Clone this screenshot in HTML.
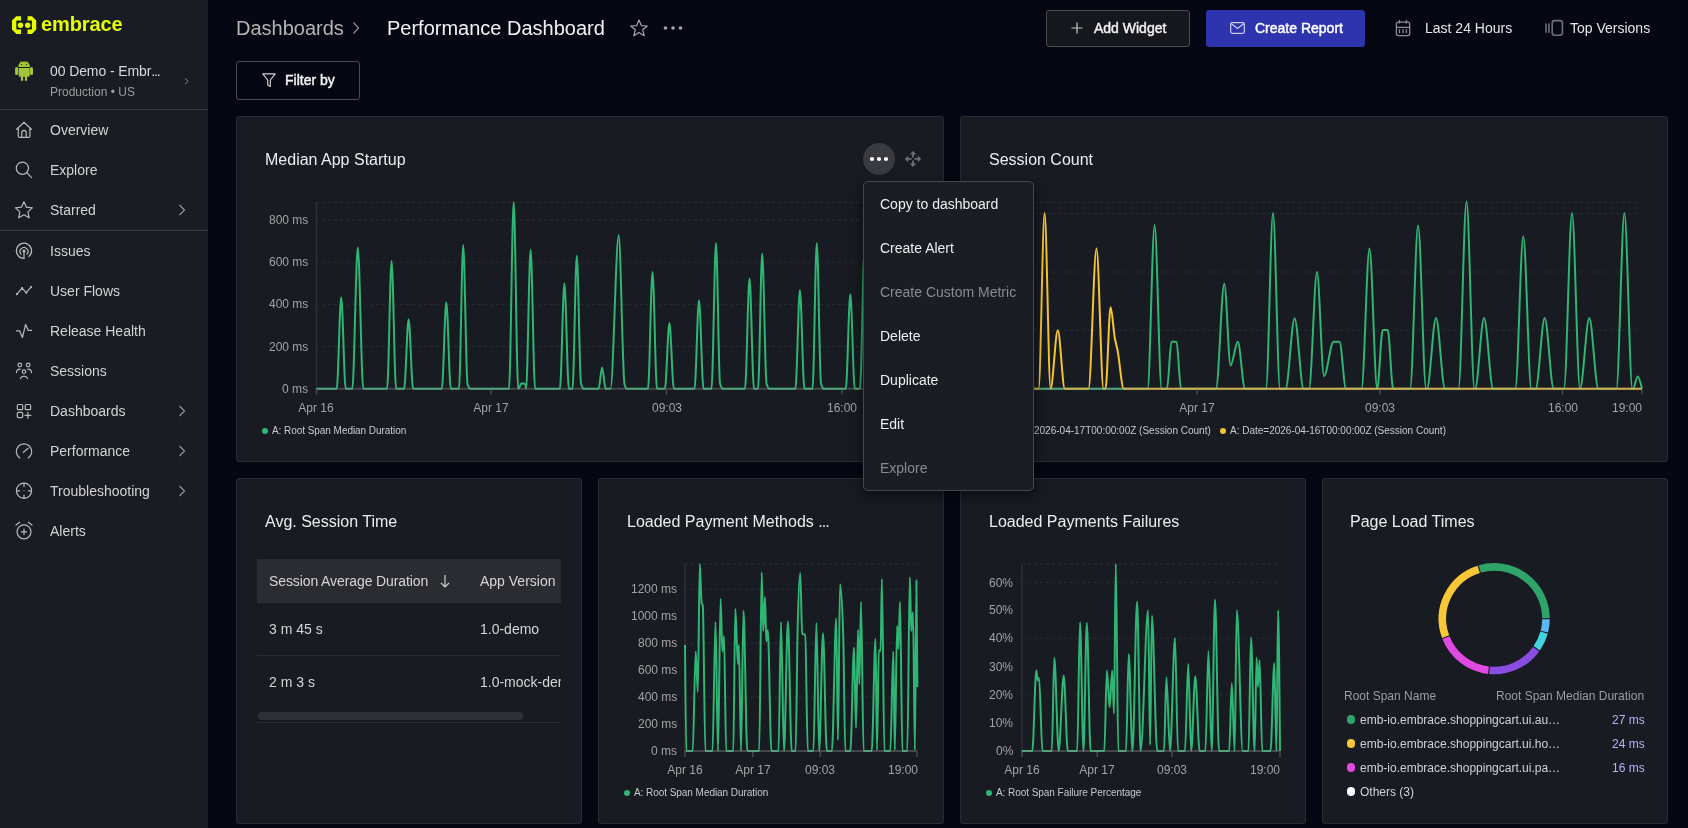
<!DOCTYPE html><html><head><meta charset="utf-8"><style>
*{box-sizing:border-box;margin:0;padding:0}
html,body{width:1688px;height:828px;overflow:hidden;background:#050812;font-family:"Liberation Sans",sans-serif}
.t{position:absolute;white-space:nowrap;will-change:transform}
.abs{position:absolute}
.side{position:absolute;left:0;top:0;width:208px;height:828px;background:#1a1c23}
.card{position:absolute;background:#191b22;border:1px solid #2b2c30;border-radius:3px}
svg{position:absolute;overflow:visible}
</style></head><body>
<div class="side"></div>
<svg style="left:0;top:0" width="208" height="110" viewBox="0 0 208 110">
<path d="M21.04,16.16 H16.33 L11.99,20.5 V29.57 L16.33,33.9 H21.04 V29.57 H16.33 V20.5 H21.04 Z" fill="#e6ff00"/>
<path d="M27.57,16.16 H31.9 L36.26,20.5 V29.57 L31.9,33.9 H27.57 V29.57 H31.9 V20.5 H27.57 Z" fill="#e6ff00"/>
<circle cx="20.5" cy="25.2" r="2.7" fill="#e6ff00"/><circle cx="27.75" cy="25.2" r="2.7" fill="#e6ff00"/>
</svg>
<div class="t" style="left:41.0px;top:14.1px;font-size:20px;line-height:20px;color:#e6ff00;font-weight:700;letter-spacing:-0.1px">embrace</div>
<svg style="left:0;top:50px" width="50" height="40" viewBox="0 50 50 40">
<path d="M18.2,67 Q18.6,61.6 24.1,61.6 Q29.6,61.6 30,67 Z" fill="#a2c53a"/>
<path d="M20.4,61.2 L21.4,62.8 M27.8,61.2 L26.8,62.8" stroke="#a2c53a" stroke-width="0.8"/>
<circle cx="21.6" cy="64.6" r="0.65" fill="#1a1c23"/><circle cx="26.5" cy="64.6" r="0.65" fill="#1a1c23"/>
<path d="M18.7,68 H29.7 V75.8 Q29.7,76.8 28.7,76.8 H19.7 Q18.7,76.8 18.7,75.8 Z" fill="#a2c53a"/>
<rect x="15.1" y="66.9" width="3.1" height="8.2" rx="1.5" fill="#a2c53a"/><rect x="29.9" y="66.9" width="3.1" height="8.2" rx="1.5" fill="#a2c53a"/>
<rect x="20.9" y="75" width="2.2" height="6.1" rx="1.1" fill="#a2c53a"/><rect x="24.9" y="75" width="2.2" height="6.1" rx="1.1" fill="#a2c53a"/>
</svg>
<div class="t" style="left:50.0px;top:64.1px;font-size:14px;line-height:14px;color:#d9d9d9;font-weight:400;letter-spacing:-0.1px">00 Demo - Embr<span style="letter-spacing:-1.2px">...</span></div>
<div class="t" style="left:50.0px;top:86.1px;font-size:12px;line-height:12px;color:#9c9c9c;font-weight:400;">Production • US</div>
<svg style="left:184px;top:77px" width="6" height="9" viewBox="0 0 6 9"><path d="M1.2,1.3 L4,4.2 L1.2,7.1" fill="none" stroke="#8a8a8a" stroke-width="1"/></svg>
<div class="abs" style="left:0;top:109px;width:208px;height:1px;background:#393b41"></div>
<div class="abs" style="left:0;top:230px;width:208px;height:1px;background:#393b41"></div>
<svg style="left:0;top:0" width="208" height="600" viewBox="0 0 208 600"><path d="M16.6,129.3 L24,122.2 L31.4,129.3 M18.3,128.2 V136.3 Q18.3,137.4 19.4,137.4 H28.8 Q29.9,137.4 29.9,136.3 V128.2 M21.8,137.4 V132.6 A2.2,2.2 0 0 1 26.2,132.6 V137.4" fill="none" stroke="#b9b9b9" stroke-width="1.2" stroke-linecap="round" stroke-linejoin="round"/><circle cx="22.4" cy="168.2" r="6.1" fill="none" stroke="#b9b9b9" stroke-width="1.2" stroke-linecap="round" stroke-linejoin="round"/><path d="M26.8,172.6 L31.6,177.6" fill="none" stroke="#b9b9b9" stroke-width="1.2" stroke-linecap="round" stroke-linejoin="round"/><path d="M23.90,201.70 L26.37,207.20 L32.36,207.85 L27.89,211.90 L29.13,217.80 L23.90,214.80 L18.67,217.80 L19.91,211.90 L15.44,207.85 L21.43,207.20 Z" fill="none" stroke="#b9b9b9" stroke-width="1.2" stroke-linecap="round" stroke-linejoin="round"/><path d="M28.9,256.6 A7.6,7.6 0 1 0 24,258.4" fill="none" stroke="#b9b9b9" stroke-width="1.2" stroke-linecap="round" stroke-linejoin="round"/><path d="M27,254.2 A4,4 0 1 0 21,254.2" fill="none" stroke="#b9b9b9" stroke-width="1.2" stroke-linecap="round" stroke-linejoin="round"/><circle cx="24" cy="251" r="1.6" fill="#b9b9b9"/><path d="M24,251 V258.3" fill="none" stroke="#b9b9b9" stroke-width="1.2" stroke-linecap="round" stroke-linejoin="round"/><path d="M16.9,294.2 L22.1,288.2 L26.2,292.7 L31.1,287.1" fill="none" stroke="#b9b9b9" stroke-width="1.2" stroke-linecap="round" stroke-linejoin="round"/><circle cx="16.9" cy="294.2" r="1.1" fill="#b9b9b9"/><circle cx="22.1" cy="288.2" r="1.1" fill="#b9b9b9"/><circle cx="26.2" cy="292.7" r="1.1" fill="#b9b9b9"/><circle cx="31.1" cy="287.1" r="1.1" fill="#b9b9b9"/><path d="M16.4,330.8 H19.6 L22.4,337.5 L25.6,324.4 L28.3,330.4 H31.5" fill="none" stroke="#b9b9b9" stroke-width="1.2" stroke-linecap="round" stroke-linejoin="round"/><circle cx="19.8" cy="365" r="1.8" fill="none" stroke="#b9b9b9" stroke-width="1.2" stroke-linecap="round" stroke-linejoin="round"/><circle cx="28.2" cy="365" r="1.8" fill="none" stroke="#b9b9b9" stroke-width="1.2" stroke-linecap="round" stroke-linejoin="round"/><circle cx="24" cy="371.6" r="1.8" fill="none" stroke="#b9b9b9" stroke-width="1.2" stroke-linecap="round" stroke-linejoin="round"/><path d="M16.5,372.6 A3.6,3.6 0 0 1 20.2,369.2 M27.8,369.2 A3.6,3.6 0 0 1 31.5,372.6 M20.4,378.6 A3.9,3.9 0 0 1 27.6,378.6" fill="none" stroke="#b9b9b9" stroke-width="1.2" stroke-linecap="round" stroke-linejoin="round"/><rect x="17.3" y="404.5" width="5.4" height="5.2" rx="1" fill="none" stroke="#b9b9b9" stroke-width="1.2" stroke-linecap="round" stroke-linejoin="round"/><rect x="25.2" y="404.5" width="5.4" height="5.2" rx="1" fill="none" stroke="#b9b9b9" stroke-width="1.2" stroke-linecap="round" stroke-linejoin="round"/><rect x="17.3" y="412.4" width="5.4" height="5.2" rx="1" fill="none" stroke="#b9b9b9" stroke-width="1.2" stroke-linecap="round" stroke-linejoin="round"/><path d="M27.9,412.3 V418.3 M24.9,415.3 H30.9" fill="none" stroke="#b9b9b9" stroke-width="1.2" stroke-linecap="round" stroke-linejoin="round"/><path d="M19.8,458 A7.7,7.7 0 1 1 28.2,458" fill="none" stroke="#b9b9b9" stroke-width="1.2" stroke-linecap="round" stroke-linejoin="round"/><path d="M23.4,452.3 L28.1,448.2" fill="none" stroke="#b9b9b9" stroke-width="1.2" stroke-linecap="round" stroke-linejoin="round"/><circle cx="24" cy="490.8" r="7.6" fill="none" stroke="#b9b9b9" stroke-width="1.2" stroke-linecap="round" stroke-linejoin="round"/><path d="M24,483.4 V486.6 M24,495 V498.2 M16.6,490.8 H19.8 M28.2,490.8 H31.4" fill="none" stroke="#b9b9b9" stroke-width="1.2" stroke-linecap="round" stroke-linejoin="round"/><circle cx="24" cy="490.8" r="0.6" fill="#b9b9b9"/><circle cx="24" cy="531.8" r="7" fill="none" stroke="#b9b9b9" stroke-width="1.2" stroke-linecap="round" stroke-linejoin="round"/><path d="M24,529.2 V534.4 M21.4,531.8 H26.6 M16,525 L19.6,522.3 M32,525 L28.4,522.3" fill="none" stroke="#b9b9b9" stroke-width="1.2" stroke-linecap="round" stroke-linejoin="round"/></svg>
<div class="t" style="left:50.0px;top:123.3px;font-size:14px;line-height:14px;color:#d3d3d3;font-weight:400;">Overview</div>
<div class="t" style="left:50.0px;top:163.3px;font-size:14px;line-height:14px;color:#d3d3d3;font-weight:400;">Explore</div>
<div class="t" style="left:50.0px;top:203.3px;font-size:14px;line-height:14px;color:#d3d3d3;font-weight:400;">Starred</div>
<svg style="left:178px;top:204px" width="8" height="12" viewBox="0 0 8 12"><path d="M1.5,1 L6.5,6 L1.5,11" fill="none" stroke="#9a9a9a" stroke-width="1.1"/></svg>
<div class="t" style="left:50.0px;top:244.3px;font-size:14px;line-height:14px;color:#d3d3d3;font-weight:400;">Issues</div>
<div class="t" style="left:50.0px;top:284.3px;font-size:14px;line-height:14px;color:#d3d3d3;font-weight:400;">User Flows</div>
<div class="t" style="left:50.0px;top:324.3px;font-size:14px;line-height:14px;color:#d3d3d3;font-weight:400;">Release Health</div>
<div class="t" style="left:50.0px;top:364.3px;font-size:14px;line-height:14px;color:#d3d3d3;font-weight:400;">Sessions</div>
<div class="t" style="left:50.0px;top:404.3px;font-size:14px;line-height:14px;color:#d3d3d3;font-weight:400;">Dashboards</div>
<svg style="left:178px;top:405px" width="8" height="12" viewBox="0 0 8 12"><path d="M1.5,1 L6.5,6 L1.5,11" fill="none" stroke="#9a9a9a" stroke-width="1.1"/></svg>
<div class="t" style="left:50.0px;top:444.3px;font-size:14px;line-height:14px;color:#d3d3d3;font-weight:400;">Performance</div>
<svg style="left:178px;top:445px" width="8" height="12" viewBox="0 0 8 12"><path d="M1.5,1 L6.5,6 L1.5,11" fill="none" stroke="#9a9a9a" stroke-width="1.1"/></svg>
<div class="t" style="left:50.0px;top:484.3px;font-size:14px;line-height:14px;color:#d3d3d3;font-weight:400;">Troubleshooting</div>
<svg style="left:178px;top:485px" width="8" height="12" viewBox="0 0 8 12"><path d="M1.5,1 L6.5,6 L1.5,11" fill="none" stroke="#9a9a9a" stroke-width="1.1"/></svg>
<div class="t" style="left:50.0px;top:524.3px;font-size:14px;line-height:14px;color:#d3d3d3;font-weight:400;">Alerts</div>
<div class="t" style="left:236.0px;top:18.4px;font-size:20px;line-height:20px;color:#b4b4b4;font-weight:400;">Dashboards</div>
<svg style="left:352px;top:21px" width="8" height="14" viewBox="0 0 8 14"><path d="M1.5,1.5 L6.5,7 L1.5,12.5" fill="none" stroke="#8d8d8d" stroke-width="1.2"/></svg>
<div class="t" style="left:387.0px;top:18.4px;font-size:20px;line-height:20px;color:#f2f2f2;font-weight:400;">Performance Dashboard</div>
<svg style="left:629px;top:18px" width="20" height="20" viewBox="0 0 20 20"><path d="M10,2 L12.3,7.6 L18.3,8 L13.7,11.8 L15.2,17.7 L10,14.4 L4.8,17.7 L6.3,11.8 L1.7,8 L7.7,7.6 Z" fill="none" stroke="#a6a6a6" stroke-width="1.2" stroke-linejoin="round"/></svg>
<svg style="left:662px;top:24px" width="22" height="8" viewBox="0 0 22 8"><circle cx="3.5" cy="4" r="1.8" fill="#a6a6a6"/><circle cx="11" cy="4" r="1.8" fill="#a6a6a6"/><circle cx="18.5" cy="4" r="1.8" fill="#a6a6a6"/></svg>
<div class="abs" style="left:1046px;top:10px;width:144px;height:37px;border:1px solid #4a4c52;border-radius:3px;background:#15171d"></div>
<svg style="left:1071px;top:22px" width="12" height="12" viewBox="0 0 12 12"><path d="M6,0.5 V11.5 M0.5,6 H11.5" stroke="#c6c6c6" stroke-width="1.2"/></svg>
<div class="t" style="left:1093.5px;top:21.1px;font-size:14px;line-height:14px;color:#f0f0f0;font-weight:400;-webkit-text-stroke:0.45px #f0f0f0">Add Widget</div>
<div class="abs" style="left:1206px;top:10px;width:159px;height:37px;border-radius:3px;background:#2e34ad"></div>
<svg style="left:1230px;top:22px" width="15" height="12" viewBox="0 0 15 12"><rect x="0.7" y="0.7" width="13.6" height="10.6" rx="1.5" fill="none" stroke="#c8cbf0" stroke-width="1.2"/><path d="M1,1.5 L7.5,6.5 L14,1.5" fill="none" stroke="#c8cbf0" stroke-width="1.2"/></svg>
<div class="t" style="left:1254.5px;top:21.1px;font-size:14px;line-height:14px;color:#ffffff;font-weight:400;-webkit-text-stroke:0.45px #ffffff">Create Report</div>
<svg style="left:1385px;top:12px" width="40" height="32" viewBox="1385 12 40 32"><rect x="1396.4" y="22.2" width="13.3" height="13.4" rx="2" fill="none" stroke="#8c8e94" stroke-width="1.3"/><path d="M1396.4,27.3 H1409.7 M1399.5,20.1 V23.6 M1406.4,20.1 V23.6 M1399.5,29.2 V33.2 M1403,29.2 V33.2 M1406.4,29.2 V33.2" stroke="#8c8e94" stroke-width="1.3"/></svg>
<div class="t" style="left:1425.0px;top:21.1px;font-size:14px;line-height:14px;color:#e6e6e6;font-weight:400;">Last 24 Hours</div>
<svg style="left:1535px;top:12px" width="40" height="32" viewBox="1535 12 40 32"><rect x="1552.2" y="20.6" width="10.2" height="14.6" rx="2.5" fill="none" stroke="#6e7077" stroke-width="1.6"/><path d="M1546,23.4 V32.8 M1548.9,23.4 V32.8" stroke="#6e7077" stroke-width="1.6"/></svg>
<div class="t" style="left:1570.0px;top:21.1px;font-size:14px;line-height:14px;color:#e6e6e6;font-weight:400;">Top Versions</div>
<div class="abs" style="left:236px;top:61px;width:124px;height:39px;border:1px solid #4a4c52;border-radius:3px"></div>
<svg style="left:262px;top:73px" width="14" height="15" viewBox="0 0 14 15"><path d="M0.8,0.8 H13.2 L8.3,7 V13.5 L5.7,12 V7 Z" fill="none" stroke="#cfcfcf" stroke-width="1.2" stroke-linejoin="round"/></svg>
<div class="t" style="left:285.0px;top:73.1px;font-size:14px;line-height:14px;color:#f2f2f2;font-weight:400;-webkit-text-stroke:0.45px #f2f2f2">Filter by</div>
<div class="card" style="left:236px;top:116px;width:708px;height:346px"></div>
<div class="card" style="left:960px;top:116px;width:708px;height:346px"></div>
<div class="card" style="left:236px;top:478px;width:346px;height:346px"></div>
<div class="card" style="left:598px;top:478px;width:346px;height:346px"></div>
<div class="card" style="left:960px;top:478px;width:346px;height:346px"></div>
<div class="card" style="left:1322px;top:478px;width:346px;height:346px"></div>
<div class="t" style="left:265.0px;top:151.5px;font-size:16px;line-height:16px;color:#ececec;font-weight:400;">Median App Startup</div>
<div class="t" style="left:989.0px;top:151.5px;font-size:16px;line-height:16px;color:#ececec;font-weight:400;">Session Count</div>
<div class="t" style="left:265.0px;top:513.5px;font-size:16px;line-height:16px;color:#ececec;font-weight:400;">Avg. Session Time</div>
<div class="t" style="left:627.0px;top:513.5px;font-size:16px;line-height:16px;color:#ececec;font-weight:400;">Loaded Payment Methods <span style="letter-spacing:-0.9px">...</span></div>
<div class="t" style="left:989.0px;top:513.5px;font-size:16px;line-height:16px;color:#ececec;font-weight:400;">Loaded Payments Failures</div>
<div class="t" style="left:1350.0px;top:513.5px;font-size:16px;line-height:16px;color:#ececec;font-weight:400;">Page Load Times</div>
<div class="t" style="right:1380.0px;top:213.7px;font-size:12px;line-height:12px;color:#a3a3a3;font-weight:400;">800 ms</div>
<div class="t" style="right:1380.0px;top:256.1px;font-size:12px;line-height:12px;color:#a3a3a3;font-weight:400;">600 ms</div>
<div class="t" style="right:1380.0px;top:298.3px;font-size:12px;line-height:12px;color:#a3a3a3;font-weight:400;">400 ms</div>
<div class="t" style="right:1380.0px;top:340.6px;font-size:12px;line-height:12px;color:#a3a3a3;font-weight:400;">200 ms</div>
<div class="t" style="right:1380.0px;top:382.9px;font-size:12px;line-height:12px;color:#a3a3a3;font-weight:400;">0 ms</div>
<div class="t" style="left:316.0px;transform:translateX(-50%);top:401.8px;font-size:12px;line-height:12px;color:#a3a3a3;font-weight:400;">Apr 16</div>
<div class="t" style="left:491.0px;transform:translateX(-50%);top:401.8px;font-size:12px;line-height:12px;color:#a3a3a3;font-weight:400;">Apr 17</div>
<div class="t" style="left:666.7px;transform:translateX(-50%);top:401.8px;font-size:12px;line-height:12px;color:#a3a3a3;font-weight:400;">09:03</div>
<div class="t" style="left:842.0px;transform:translateX(-50%);top:401.8px;font-size:12px;line-height:12px;color:#a3a3a3;font-weight:400;">16:00</div>
<div class="abs" style="left:262px;top:427.5px;width:6px;height:6px;border-radius:3px;background:#2fb574"></div>
<div class="t" style="left:272.0px;top:425.8px;font-size:10px;line-height:10px;color:#c9c9c9;font-weight:400;letter-spacing:-0.05px">A: Root Span Median Duration</div>
<div class="t" style="left:1197.0px;transform:translateX(-50%);top:401.8px;font-size:12px;line-height:12px;color:#a3a3a3;font-weight:400;">Apr 17</div>
<div class="t" style="left:1380.0px;transform:translateX(-50%);top:401.8px;font-size:12px;line-height:12px;color:#a3a3a3;font-weight:400;">09:03</div>
<div class="t" style="left:1562.6px;transform:translateX(-50%);top:401.8px;font-size:12px;line-height:12px;color:#a3a3a3;font-weight:400;">16:00</div>
<div class="t" style="left:1627.0px;transform:translateX(-50%);top:401.8px;font-size:12px;line-height:12px;color:#a3a3a3;font-weight:400;">19:00</div>
<div class="t" style="left:1034.0px;top:425.8px;font-size:10px;line-height:10px;color:#c9c9c9;font-weight:400;">2026-04-17T00:00:00Z (Session Count)</div>
<div class="abs" style="left:1220px;top:427.5px;width:6px;height:6px;border-radius:3px;background:#f5c431"></div>
<div class="t" style="left:1230.0px;top:425.8px;font-size:10px;line-height:10px;color:#c9c9c9;font-weight:400;">A: Date=2026-04-16T00:00:00Z (Session Count)</div>
<div class="abs" style="left:257px;top:559px;width:304px;height:44px;background:#2a2c31"></div>
<div class="t" style="left:269.0px;top:574.1px;font-size:14px;line-height:14px;color:#d6d6d6;font-weight:400;letter-spacing:-0.1px">Session Average Duration</div>
<svg style="left:440px;top:574px" width="10" height="14" viewBox="0 0 10 14"><path d="M5,1 V13 M1,9 L5,13 L9,9" fill="none" stroke="#d0d0d0" stroke-width="1.2"/></svg>
<div class="t" style="left:480.0px;top:574.1px;font-size:14px;line-height:14px;color:#d6d6d6;font-weight:400;">App Version</div>
<div class="t" style="left:269.0px;top:622.1px;font-size:14px;line-height:14px;color:#d6d6d6;font-weight:400;">3 m 45 s</div>
<div class="t" style="left:480.0px;top:622.1px;font-size:14px;line-height:14px;color:#d6d6d6;font-weight:400;">1.0-demo</div>
<div class="abs" style="left:257px;top:655px;width:304px;height:1px;background:#2b2d33"></div>
<div class="t" style="left:269.0px;top:675.1px;font-size:14px;line-height:14px;color:#d6d6d6;font-weight:400;">2 m 3 s</div>
<div class="abs" style="left:480px;top:670px;width:81px;height:22px;overflow:hidden"><div class="t" style="left:0;top:5.15px;font-size:14px;line-height:14px;color:#d6d6d6">1.0-mock-demo</div></div>
<div class="abs" style="left:258px;top:712px;width:265px;height:8px;border-radius:4px;background:#2e3036"></div>
<div class="abs" style="left:257px;top:722px;width:304px;height:1px;background:#2b2d33"></div>
<div class="t" style="right:1011.0px;top:583.4px;font-size:12px;line-height:12px;color:#a3a3a3;font-weight:400;">1200 ms</div>
<div class="t" style="right:1011.0px;top:610.4px;font-size:12px;line-height:12px;color:#a3a3a3;font-weight:400;">1000 ms</div>
<div class="t" style="right:1011.0px;top:637.4px;font-size:12px;line-height:12px;color:#a3a3a3;font-weight:400;">800 ms</div>
<div class="t" style="right:1011.0px;top:664.1px;font-size:12px;line-height:12px;color:#a3a3a3;font-weight:400;">600 ms</div>
<div class="t" style="right:1011.0px;top:691.1px;font-size:12px;line-height:12px;color:#a3a3a3;font-weight:400;">400 ms</div>
<div class="t" style="right:1011.0px;top:718.1px;font-size:12px;line-height:12px;color:#a3a3a3;font-weight:400;">200 ms</div>
<div class="t" style="right:1011.0px;top:745.1px;font-size:12px;line-height:12px;color:#a3a3a3;font-weight:400;">0 ms</div>
<div class="t" style="left:685.0px;transform:translateX(-50%);top:763.8px;font-size:12px;line-height:12px;color:#a3a3a3;font-weight:400;">Apr 16</div>
<div class="t" style="left:752.8px;transform:translateX(-50%);top:763.8px;font-size:12px;line-height:12px;color:#a3a3a3;font-weight:400;">Apr 17</div>
<div class="t" style="left:820.3px;transform:translateX(-50%);top:763.8px;font-size:12px;line-height:12px;color:#a3a3a3;font-weight:400;">09:03</div>
<div class="t" style="left:903.0px;transform:translateX(-50%);top:763.8px;font-size:12px;line-height:12px;color:#a3a3a3;font-weight:400;">19:00</div>
<div class="abs" style="left:623.5px;top:789.5px;width:6px;height:6px;border-radius:3px;background:#2fb574"></div>
<div class="t" style="left:634.0px;top:788.0px;font-size:10px;line-height:10px;color:#c9c9c9;font-weight:400;letter-spacing:-0.05px">A: Root Span Median Duration</div>
<div class="t" style="right:674.5px;top:576.5px;font-size:12px;line-height:12px;color:#a3a3a3;font-weight:400;">60%</div>
<div class="t" style="right:674.5px;top:604.4px;font-size:12px;line-height:12px;color:#a3a3a3;font-weight:400;">50%</div>
<div class="t" style="right:674.5px;top:632.3px;font-size:12px;line-height:12px;color:#a3a3a3;font-weight:400;">40%</div>
<div class="t" style="right:674.5px;top:660.5px;font-size:12px;line-height:12px;color:#a3a3a3;font-weight:400;">30%</div>
<div class="t" style="right:674.5px;top:688.7px;font-size:12px;line-height:12px;color:#a3a3a3;font-weight:400;">20%</div>
<div class="t" style="right:674.5px;top:716.9px;font-size:12px;line-height:12px;color:#a3a3a3;font-weight:400;">10%</div>
<div class="t" style="right:674.5px;top:745.1px;font-size:12px;line-height:12px;color:#a3a3a3;font-weight:400;">0%</div>
<div class="t" style="left:1022.0px;transform:translateX(-50%);top:763.8px;font-size:12px;line-height:12px;color:#a3a3a3;font-weight:400;">Apr 16</div>
<div class="t" style="left:1097.2px;transform:translateX(-50%);top:763.8px;font-size:12px;line-height:12px;color:#a3a3a3;font-weight:400;">Apr 17</div>
<div class="t" style="left:1172.0px;transform:translateX(-50%);top:763.8px;font-size:12px;line-height:12px;color:#a3a3a3;font-weight:400;">09:03</div>
<div class="t" style="left:1265.0px;transform:translateX(-50%);top:763.8px;font-size:12px;line-height:12px;color:#a3a3a3;font-weight:400;">19:00</div>
<div class="abs" style="left:985.5px;top:789.5px;width:6px;height:6px;border-radius:3px;background:#2fb574"></div>
<div class="t" style="left:996.0px;top:788.0px;font-size:10px;line-height:10px;color:#c9c9c9;font-weight:400;letter-spacing:-0.05px">A: Root Span Failure Percentage</div>
<div class="t" style="left:1343.5px;top:689.9px;font-size:12px;line-height:12px;color:#9d9d9d;font-weight:400;">Root Span Name</div>
<div class="t" style="right:43.5px;top:689.9px;font-size:12px;line-height:12px;color:#9d9d9d;font-weight:400;">Root Span Median Duration</div>
<div class="abs" style="left:1346.8px;top:715.1999999999999px;width:8.4px;height:8.4px;border-radius:5px;background:#2ea36a"></div>
<div class="t" style="left:1359.5px;top:713.5px;font-size:12px;line-height:12px;color:#d2d2d2;font-weight:400;">emb-io.embrace.shoppingcart.ui.au…</div>
<div class="t" style="right:43.5px;top:713.5px;font-size:12px;line-height:12px;color:#b6b3fa;font-weight:400;">27 ms</div>
<div class="abs" style="left:1346.8px;top:739.1999999999999px;width:8.4px;height:8.4px;border-radius:5px;background:#f8c737"></div>
<div class="t" style="left:1359.5px;top:737.5px;font-size:12px;line-height:12px;color:#d2d2d2;font-weight:400;">emb-io.embrace.shoppingcart.ui.ho…</div>
<div class="t" style="right:43.5px;top:737.5px;font-size:12px;line-height:12px;color:#b6b3fa;font-weight:400;">24 ms</div>
<div class="abs" style="left:1346.8px;top:763.1999999999999px;width:8.4px;height:8.4px;border-radius:5px;background:#e04ae3"></div>
<div class="t" style="left:1359.5px;top:761.5px;font-size:12px;line-height:12px;color:#d2d2d2;font-weight:400;">emb-io.embrace.shoppingcart.ui.pa…</div>
<div class="t" style="right:43.5px;top:761.5px;font-size:12px;line-height:12px;color:#b6b3fa;font-weight:400;">16 ms</div>
<div class="abs" style="left:1346.8px;top:787.3px;width:8.4px;height:8.4px;border-radius:5px;background:#ffffff"></div>
<div class="t" style="left:1359.5px;top:785.6px;font-size:12px;line-height:12px;color:#d2d2d2;font-weight:400;">Others (3)</div>
<svg style="left:0;top:0" width="1688" height="828" viewBox="0 0 1688 828"><path d="M316,202.5 H917" stroke="#2a2c32" stroke-width="1" stroke-dasharray="3,3"/><path d="M316,220 H917" stroke="#2a2c32" stroke-width="1" stroke-dasharray="3,3"/><path d="M316,262.2 H917" stroke="#2a2c32" stroke-width="1" stroke-dasharray="3,3"/><path d="M316,304.3 H917" stroke="#2a2c32" stroke-width="1" stroke-dasharray="3,3"/><path d="M316,346.5 H917" stroke="#2a2c32" stroke-width="1" stroke-dasharray="3,3"/><path d="M316.5,202 V388.8" stroke="#2e2f34" stroke-width="1.6"/><path d="M316.50,388.80C323.23,388.80 329.97,388.80 336.70,388.80C338.20,388.80 339.70,297.20 341.20,297.20C342.70,297.20 344.20,388.80 345.70,388.80C347.90,388.80 350.10,388.80 352.30,388.80C354.13,388.80 355.97,247.40 357.80,247.40C359.63,247.40 361.47,388.80 363.30,388.80C371.23,388.80 379.17,388.80 387.10,388.80C388.60,388.80 390.10,261.00 391.60,261.00C393.10,261.00 394.60,388.80 396.10,388.80C398.77,388.80 401.43,388.80 404.10,388.80C405.60,388.80 407.10,319.30 408.60,319.30C410.10,319.30 411.60,388.80 413.10,388.80C422.67,388.80 432.23,388.80 441.80,388.80C443.30,388.80 444.80,302.30 446.30,302.30C447.80,302.30 449.30,388.80 450.80,388.80C453.53,388.80 456.27,388.80 459.00,388.80C460.40,388.80 461.80,245.00 463.20,245.00C464.63,245.00 466.07,379.41 467.50,384.00C468.50,387.20 469.50,388.80 470.50,388.80C483.33,388.80 496.17,388.80 509.00,388.80C510.57,388.80 512.13,202.00 513.70,202.00C515.20,202.00 516.70,388.80 518.20,388.80C519.40,388.80 520.60,383.30 521.80,383.30C523.00,383.30 524.20,383.70 525.40,384.50C525.63,384.66 525.87,388.80 526.10,388.80C527.60,388.80 529.10,249.80 530.60,249.80C532.10,249.80 533.60,388.80 535.10,388.80C543.37,388.80 551.63,388.80 559.90,388.80C561.40,388.80 562.90,283.60 564.40,283.60C565.90,283.60 567.40,388.80 568.90,388.80C570.10,388.80 571.30,388.80 572.50,388.80C573.93,388.80 575.37,255.80 576.80,255.80C578.20,255.80 579.60,378.55 581.00,383.50C582.00,387.03 583.00,388.80 584.00,388.80C588.87,388.80 593.73,388.80 598.60,388.80C599.77,388.80 600.93,367.60 602.10,367.60C603.27,367.60 604.43,388.80 605.60,388.80C607.23,388.80 608.87,388.80 610.50,388.80C613.23,388.80 615.97,235.30 618.70,235.30C620.63,235.30 622.57,376.58 624.50,384.00C625.33,387.20 626.17,388.80 627.00,388.80C634.00,388.80 641.00,388.80 648.00,388.80C649.50,388.80 651.00,272.10 652.50,272.10C654.00,272.10 655.50,388.80 657.00,388.80C659.63,388.80 662.27,388.80 664.90,388.80C666.40,388.80 667.90,322.90 669.40,322.90C670.90,322.90 672.40,388.80 673.90,388.80C680.77,388.80 687.63,388.80 694.50,388.80C696.00,388.80 697.50,300.20 699.00,300.20C700.50,300.20 702.00,388.80 703.50,388.80C706.17,388.80 708.83,388.80 711.50,388.80C713.00,388.80 714.50,242.90 716.00,242.90C717.33,242.90 718.67,378.79 720.00,383.50C721.00,387.03 722.00,388.80 723.00,388.80C730.33,388.80 737.67,388.80 745.00,388.80C746.50,388.80 748.00,278.50 749.50,278.50C751.00,278.50 752.50,388.80 754.00,388.80C755.33,388.80 756.67,388.80 758.00,388.80C759.40,388.80 760.80,253.40 762.20,253.40C763.63,253.40 765.07,378.44 766.50,383.50C767.50,387.03 768.50,388.80 769.50,388.80C778.13,388.80 786.77,388.80 795.40,388.80C796.90,388.80 798.40,290.30 799.90,290.30C801.40,290.30 802.90,388.80 804.40,388.80C807.10,388.80 809.80,388.80 812.50,388.80C813.93,388.80 815.37,242.90 816.80,242.90C818.20,242.90 819.60,378.55 821.00,383.50C822.00,387.03 823.00,388.80 824.00,388.80C831.27,388.80 838.53,388.80 845.80,388.80C847.30,388.80 848.80,294.20 850.30,294.20C851.80,294.20 853.30,388.80 854.80,388.80C856.53,388.80 858.27,388.80 860.00,388.80C861.50,388.80 863.00,250.00 864.50,250.00C866.00,250.00 867.50,388.80 869.00,388.80C872.83,388.80 876.67,388.80 880.50,388.80C882.00,388.80 883.50,280.00 885.00,280.00C886.50,280.00 888.00,388.80 889.50,388.80C892.17,388.80 894.83,388.80 897.50,388.80C899.00,388.80 900.50,300.00 902.00,300.00C903.50,300.00 905.00,388.80 906.50,388.80C910.00,388.80 913.50,388.80 917.00,388.80" fill="none" stroke="#2fb574" stroke-width="2"/><path d="M1022,202.5 H1641" stroke="#2a2c32" stroke-width="1" stroke-dasharray="3,3"/><path d="M1022,213.5 H1641" stroke="#2a2c32" stroke-width="1" stroke-dasharray="3,3"/><path d="M1022,272 H1641" stroke="#2a2c32" stroke-width="1" stroke-dasharray="3,3"/><path d="M1022,330 H1641" stroke="#2a2c32" stroke-width="1" stroke-dasharray="3,3"/><path d="M1022,202 V388.8" stroke="#2e2f34" stroke-width="1.6"/><path d="M1022.00,388.80C1063.87,388.80 1105.73,388.80 1147.60,388.80C1149.93,388.80 1152.27,225.00 1154.60,225.00C1156.93,225.00 1159.27,388.80 1161.60,388.80C1163.40,388.80 1165.20,388.80 1167.00,388.80C1168.50,388.80 1170.00,341.80 1171.50,341.80C1173.17,341.80 1174.83,341.80 1176.50,341.80C1178.00,341.80 1179.50,388.80 1181.00,388.80C1192.67,388.80 1204.33,388.80 1216.00,388.80C1218.77,388.80 1221.53,283.70 1224.30,283.70C1226.40,283.70 1228.50,365.40 1230.60,365.40C1233.00,365.40 1235.40,341.80 1237.80,341.80C1240.20,341.80 1242.60,388.80 1245.00,388.80C1252.00,388.80 1259.00,388.80 1266.00,388.80C1268.33,388.80 1270.67,213.00 1273.00,213.00C1275.33,213.00 1277.67,388.80 1280.00,388.80C1281.87,388.80 1283.73,388.80 1285.60,388.80C1288.60,388.80 1291.60,318.20 1294.60,318.20C1297.60,318.20 1300.60,388.80 1303.60,388.80C1305.40,388.80 1307.20,388.80 1309.00,388.80C1311.67,388.80 1314.33,272.00 1317.00,272.00C1319.33,272.00 1321.67,376.00 1324.00,376.00C1327.17,376.00 1330.33,341.70 1333.50,341.70C1335.50,341.70 1337.50,341.70 1339.50,341.70C1341.67,341.70 1343.83,388.80 1346.00,388.80C1351.17,388.80 1356.33,388.80 1361.50,388.80C1364.17,388.80 1366.83,248.40 1369.50,248.40C1372.07,248.40 1374.63,388.80 1377.20,388.80C1379.03,388.80 1380.87,330.00 1382.70,330.00C1384.37,330.00 1386.03,330.00 1387.70,330.00C1389.53,330.00 1391.37,388.80 1393.20,388.80C1398.83,388.80 1404.47,388.80 1410.10,388.80C1412.77,388.80 1415.43,225.50 1418.10,225.50C1420.77,225.50 1423.43,388.80 1426.10,388.80C1426.40,388.80 1426.70,388.80 1427.00,388.80C1430.00,388.80 1433.00,318.00 1436.00,318.00C1439.00,318.00 1442.00,388.80 1445.00,388.80C1449.50,388.80 1454.00,388.80 1458.50,388.80C1461.17,388.80 1463.83,201.40 1466.50,201.40C1469.17,201.40 1471.83,388.80 1474.50,388.80C1474.70,388.80 1474.90,388.80 1475.10,388.80C1478.10,388.80 1481.10,318.00 1484.10,318.00C1487.10,318.00 1490.10,388.80 1493.10,388.80C1500.50,388.80 1507.90,388.80 1515.30,388.80C1517.97,388.80 1520.63,236.50 1523.30,236.50C1525.97,236.50 1528.63,388.80 1531.30,388.80C1532.77,388.80 1534.23,388.80 1535.70,388.80C1538.70,388.80 1541.70,318.00 1544.70,318.00C1547.70,318.00 1550.70,388.80 1553.70,388.80C1557.13,388.80 1560.57,388.80 1564.00,388.80C1566.67,388.80 1569.33,213.00 1572.00,213.00C1574.67,213.00 1577.33,388.80 1580.00,388.80C1583.10,388.80 1586.20,318.00 1589.30,318.00C1592.30,318.00 1595.30,388.80 1598.30,388.80C1604.33,388.80 1610.37,388.80 1616.40,388.80C1619.07,388.80 1621.73,213.00 1624.40,213.00C1627.07,213.00 1629.73,388.80 1632.40,388.80C1632.60,388.80 1632.80,388.80 1633.00,388.80C1634.57,388.80 1636.13,376.50 1637.70,376.50C1639.13,376.50 1640.57,382.65 1642.00,388.80" fill="none" stroke="#2fb574" stroke-width="2"/><path d="M1022.00,388.80C1027.53,388.80 1033.07,388.80 1038.60,388.80C1040.60,388.80 1042.60,213.00 1044.60,213.00C1046.60,213.00 1048.60,388.80 1050.60,388.80C1053.00,388.80 1055.40,330.20 1057.80,330.20C1060.13,330.20 1062.47,388.80 1064.80,388.80C1072.70,388.80 1080.60,388.80 1088.50,388.80C1091.17,388.80 1093.83,248.50 1096.50,248.50C1098.83,248.50 1101.17,388.80 1103.50,388.80C1104.17,388.80 1104.83,388.80 1105.50,388.80C1107.20,388.80 1108.90,307.20 1110.60,307.20C1112.00,307.20 1113.40,330.20 1114.80,338.00C1115.70,343.02 1116.60,345.54 1117.50,350.00C1119.60,360.41 1121.70,388.80 1123.80,388.80C1296.53,388.80 1469.27,388.80 1642.00,388.80" fill="none" stroke="#f5c431" stroke-width="2"/><path d="M685,564 H917" stroke="#2a2c32" stroke-width="1" stroke-dasharray="3,3"/><path d="M685,589.3 H917" stroke="#2a2c32" stroke-width="1" stroke-dasharray="3,3"/><path d="M685,643.3 H917" stroke="#2a2c32" stroke-width="1" stroke-dasharray="3,3"/><path d="M685,697 H917" stroke="#2a2c32" stroke-width="1" stroke-dasharray="3,3"/><path d="M685,564 V751" stroke="#2e2f34" stroke-width="1.6"/><path d="M685.00,645.00C685.43,698.00 685.87,751.00 686.30,751.00C688.43,751.00 690.57,751.00 692.70,751.00C693.70,751.00 694.70,651.40 695.70,651.40C696.40,651.40 697.10,692.00 697.80,692.00C698.47,692.00 699.13,564.00 699.80,564.00C700.40,564.00 701.00,600.20 701.60,603.00C702.00,604.87 702.40,603.93 702.80,605.80C703.67,609.84 704.53,751.00 705.40,751.00C707.77,751.00 710.13,751.00 712.50,751.00C713.50,751.00 714.50,622.00 715.50,622.00C716.33,622.00 717.17,751.00 718.00,751.00C718.87,751.00 719.73,598.70 720.60,598.70C721.20,598.70 721.80,651.40 722.40,651.40C722.93,651.40 723.47,636.00 724.00,636.00C724.73,636.00 725.47,751.00 726.20,751.00C728.57,751.00 730.93,751.00 733.30,751.00C733.97,751.00 734.63,608.80 735.30,608.80C736.17,608.80 737.03,664.00 737.90,664.00C738.23,664.00 738.57,645.00 738.90,645.00C739.60,645.00 740.30,751.00 741.00,751.00C741.83,751.00 742.67,610.80 743.50,610.80C744.77,610.80 746.03,751.00 747.30,751.00C751.27,751.00 755.23,751.00 759.20,751.00C760.03,751.00 760.87,572.30 761.70,572.30C762.20,572.30 762.70,631.00 763.20,631.00C763.80,631.00 764.40,596.90 765.00,596.90C765.43,596.90 765.87,641.30 766.30,641.30C766.80,641.30 767.30,630.00 767.80,630.00C769.00,630.00 770.20,751.00 771.40,751.00C773.77,751.00 776.13,751.00 778.50,751.00C779.33,751.00 780.17,622.00 781.00,622.00C782.00,622.00 783.00,751.00 784.00,751.00C785.30,751.00 786.60,621.50 787.90,621.50C789.17,621.50 790.43,751.00 791.70,751.00C793.00,751.00 794.30,751.00 795.60,751.00C796.27,751.00 796.93,660.10 797.60,631.00C798.47,593.17 799.33,572.80 800.20,572.80C800.87,572.80 801.53,633.12 802.20,633.70C803.20,634.57 804.20,634.13 805.20,635.00C806.07,635.75 806.93,751.00 807.80,751.00C809.67,751.00 811.53,751.00 813.40,751.00C814.40,751.00 815.40,623.00 816.40,623.00C817.33,623.00 818.27,751.00 819.20,751.00C820.47,751.00 821.73,633.20 823.00,633.20C824.27,633.20 825.53,751.00 826.80,751.00C828.50,751.00 830.20,751.00 831.90,751.00C833.33,751.00 834.77,618.50 836.20,618.50C836.80,618.50 837.40,740.00 838.00,740.00C838.67,740.00 839.33,584.20 840.00,584.20C841.10,584.20 842.20,602.40 843.30,638.80C843.97,660.86 844.63,751.00 845.30,751.00C847.00,751.00 848.70,751.00 850.40,751.00C851.60,751.00 852.80,647.60 854.00,647.60C854.67,647.60 855.33,728.00 856.00,728.00C856.67,728.00 857.33,630.00 858.00,630.00C858.43,630.00 858.87,684.40 859.30,684.40C859.87,684.40 860.43,602.00 861.00,602.00C861.87,602.00 862.73,751.00 863.60,751.00C866.30,751.00 869.00,751.00 871.70,751.00C872.97,751.00 874.23,638.80 875.50,638.80C876.00,638.80 876.50,750.00 877.00,750.00C877.60,750.00 878.20,650.20 878.80,650.20C879.40,650.20 880.00,651.00 880.60,651.00C881.03,651.00 881.47,579.00 881.90,579.00C882.73,579.00 883.57,751.00 884.40,751.00C886.37,751.00 888.33,751.00 890.30,751.00C891.30,751.00 892.30,651.40 893.30,651.40C893.80,651.40 894.30,750.00 894.80,750.00C895.57,750.00 896.33,626.00 897.10,626.00C897.53,626.00 897.97,649.00 898.40,649.00C898.93,649.00 899.47,602.00 900.00,602.00C900.80,602.00 901.60,751.00 902.40,751.00C904.03,751.00 905.67,751.00 907.30,751.00C908.13,751.00 908.97,577.30 909.80,577.30C910.30,577.30 910.80,631.00 911.30,631.00C911.87,631.00 912.43,612.00 913.00,612.00C913.63,612.00 914.27,750.00 914.90,750.00C915.40,750.00 915.90,580.40 916.40,580.40C916.73,580.40 917.07,633.70 917.40,687.00" fill="none" stroke="#2fb574" stroke-width="2"/><path d="M1022,564 H1280" stroke="#2a2c32" stroke-width="1" stroke-dasharray="3,3"/><path d="M1022,582.4 H1280" stroke="#2a2c32" stroke-width="1" stroke-dasharray="3,3"/><path d="M1022,638.2 H1280" stroke="#2a2c32" stroke-width="1" stroke-dasharray="3,3"/><path d="M1022,694.6 H1280" stroke="#2a2c32" stroke-width="1" stroke-dasharray="3,3"/><path d="M1022,564 V751" stroke="#2e2f34" stroke-width="1.6"/><path d="M1022.00,751.00C1025.43,751.00 1028.87,751.00 1032.30,751.00C1033.63,751.00 1034.97,670.50 1036.30,670.50C1036.80,670.50 1037.30,680.60 1037.80,680.60C1038.23,680.60 1038.67,678.00 1039.10,678.00C1040.20,678.00 1041.30,751.00 1042.40,751.00C1045.53,751.00 1048.67,751.00 1051.80,751.00C1052.63,751.00 1053.47,657.80 1054.30,657.80C1055.77,657.80 1057.23,751.00 1058.70,751.00C1060.37,751.00 1062.03,675.60 1063.70,675.60C1065.07,675.60 1066.43,751.00 1067.80,751.00C1070.93,751.00 1074.07,751.00 1077.20,751.00C1078.13,751.00 1079.07,622.30 1080.00,622.30C1081.17,622.30 1082.33,751.00 1083.50,751.00C1084.60,751.00 1085.70,623.00 1086.80,623.00C1088.07,623.00 1089.33,751.00 1090.60,751.00C1095.17,751.00 1099.73,751.00 1104.30,751.00C1105.17,751.00 1106.03,670.50 1106.90,670.50C1107.83,670.50 1108.77,707.30 1109.70,707.30C1110.53,707.30 1111.37,670.50 1112.20,670.50C1112.80,670.50 1113.40,713.60 1114.00,713.60C1114.60,713.60 1115.20,563.90 1115.80,563.90C1116.63,563.90 1117.47,751.00 1118.30,751.00C1120.87,751.00 1123.43,751.00 1126.00,751.00C1126.90,751.00 1127.80,654.00 1128.70,654.00C1129.97,654.00 1131.23,751.00 1132.50,751.00C1134.03,751.00 1135.57,601.40 1137.10,601.40C1138.27,601.40 1139.43,751.00 1140.60,751.00C1143.10,751.00 1145.60,610.30 1148.10,610.30C1148.77,610.30 1149.43,745.00 1150.10,745.00C1150.70,745.00 1151.30,615.80 1151.90,615.80C1153.67,615.80 1155.43,751.00 1157.20,751.00C1159.47,751.00 1161.73,751.00 1164.00,751.00C1164.80,751.00 1165.60,677.20 1166.40,677.20C1167.60,677.20 1168.80,751.00 1170.00,751.00C1171.67,751.00 1173.33,638.10 1175.00,638.10C1176.00,638.10 1177.00,751.00 1178.00,751.00C1180.33,751.00 1182.67,751.00 1185.00,751.00C1186.07,751.00 1187.13,664.00 1188.20,664.00C1189.20,664.00 1190.20,751.00 1191.20,751.00C1192.57,751.00 1193.93,676.20 1195.30,676.20C1196.73,676.20 1198.17,751.00 1199.60,751.00C1201.53,751.00 1203.47,751.00 1205.40,751.00C1206.40,751.00 1207.40,651.30 1208.40,651.30C1209.50,651.30 1210.60,751.00 1211.70,751.00C1212.80,751.00 1213.90,599.40 1215.00,599.40C1216.33,599.40 1217.67,751.00 1219.00,751.00C1222.40,751.00 1225.80,751.00 1229.20,751.00C1230.07,751.00 1230.93,683.00 1231.80,683.00C1232.73,683.00 1233.67,751.00 1234.60,751.00C1235.33,751.00 1236.07,610.30 1236.80,610.30C1238.77,610.30 1240.73,751.00 1242.70,751.00C1244.63,751.00 1246.57,751.00 1248.50,751.00C1249.33,751.00 1250.17,637.40 1251.00,637.40C1252.20,637.40 1253.40,751.00 1254.60,751.00C1255.27,751.00 1255.93,657.70 1256.60,657.70C1257.03,657.70 1257.47,686.80 1257.90,686.80C1258.47,686.80 1259.03,660.20 1259.60,660.20C1260.47,660.20 1261.33,751.00 1262.20,751.00C1264.97,751.00 1267.73,751.00 1270.50,751.00C1271.77,751.00 1273.03,662.70 1274.30,662.70C1275.00,662.70 1275.70,751.00 1276.40,751.00C1276.97,751.00 1277.53,610.30 1278.10,610.30C1278.73,610.30 1279.37,680.65 1280.00,751.00" fill="none" stroke="#2fb574" stroke-width="2"/><path d="M1479.75,568.96 A51.8,51.8 0 0 1 1546.00,618.16" fill="none" stroke="#2ea36a" stroke-width="7.6"/><path d="M1546.00,619.24 A51.8,51.8 0 0 1 1544.37,631.58" fill="none" stroke="#5cb6f2" stroke-width="7.6"/><path d="M1544.09,632.63 A51.8,51.8 0 0 1 1536.74,648.26" fill="none" stroke="#43d3df" stroke-width="7.6"/><path d="M1536.11,649.15 A51.8,51.8 0 0 1 1489.51,670.29" fill="none" stroke="#8a4de4" stroke-width="7.6"/><path d="M1488.43,670.18 A51.8,51.8 0 0 1 1445.97,637.60" fill="none" stroke="#e04ae3" stroke-width="7.6"/><path d="M1445.59,636.59 A51.8,51.8 0 0 1 1478.71,569.27" fill="none" stroke="#f8c737" stroke-width="7.6"/><path d="M315.7,388.8 H917" stroke="rgba(136,136,138,0.41)" stroke-width="2"/><path d="M316.5,389.8 V394.8" stroke="#46474c" stroke-width="1.6"/><path d="M491,389.8 V394.8" stroke="#46474c" stroke-width="1.6"/><path d="M666.5,389.8 V394.8" stroke="#46474c" stroke-width="1.6"/><path d="M842,389.8 V394.8" stroke="#46474c" stroke-width="1.6"/><path d="M1021.2,388.8 H1642" stroke="rgba(136,136,138,0.41)" stroke-width="2"/><path d="M1197,389.8 V394.8" stroke="#46474c" stroke-width="1.6"/><path d="M1380,389.8 V394.8" stroke="#46474c" stroke-width="1.6"/><path d="M1562.5,389.8 V394.8" stroke="#46474c" stroke-width="1.6"/><path d="M1642,389.8 V394.8" stroke="#46474c" stroke-width="1.6"/><path d="M684.2,751 H917.5" stroke="rgba(136,136,138,0.41)" stroke-width="2"/><path d="M685,752 V757" stroke="#46474c" stroke-width="1.6"/><path d="M752.8,752 V757" stroke="#46474c" stroke-width="1.6"/><path d="M820.3,752 V757" stroke="#46474c" stroke-width="1.6"/><path d="M917,752 V757" stroke="#46474c" stroke-width="1.6"/><path d="M1021.2,751 H1280.5" stroke="rgba(136,136,138,0.41)" stroke-width="2"/><path d="M1022,752 V757" stroke="#46474c" stroke-width="1.6"/><path d="M1097.2,752 V757" stroke="#46474c" stroke-width="1.6"/><path d="M1172,752 V757" stroke="#46474c" stroke-width="1.6"/><path d="M1280,752 V757" stroke="#46474c" stroke-width="1.6"/></svg>
<div class="abs" style="left:863px;top:143px;width:32px;height:32px;border-radius:16px;background:#3a3b40"></div>
<svg style="left:863px;top:143px" width="32" height="32" viewBox="0 0 32 32"><circle cx="9" cy="16" r="2.1" fill="#fff"/><circle cx="16" cy="16" r="2.1" fill="#fff"/><circle cx="23" cy="16" r="2.1" fill="#fff"/></svg>
<svg style="left:900px;top:146px" width="26" height="26" viewBox="900 146 26 26"><path d="M913,153.5 V157.6 M913,160.4 V164.5 M907.5,158.9 H911.6 M914.4,158.9 H918.5" stroke="#6b6e75" stroke-width="1.8"/><path d="M913,151 L916.3,154.4 H909.7 Z M913,167 L916.3,163.6 H909.7 Z M904.8,158.9 L908.2,155.6 V162.2 Z M921.2,158.9 L917.8,155.6 V162.2 Z" fill="#6b6e75"/></svg>
<div class="abs" style="left:863px;top:181px;width:171px;height:310px;background:#1b1d24;border:1px solid #45474c;border-radius:5px;box-shadow:0 4px 14px rgba(0,0,0,0.55)"></div>
<div class="t" style="left:880.0px;top:197.0px;font-size:14px;line-height:14px;color:#ededed;font-weight:400;">Copy to dashboard</div>
<div class="t" style="left:880.0px;top:241.2px;font-size:14px;line-height:14px;color:#ededed;font-weight:400;">Create Alert</div>
<div class="t" style="left:880.0px;top:284.9px;font-size:14px;line-height:14px;color:#8a8b8e;font-weight:400;">Create Custom Metric</div>
<div class="t" style="left:880.0px;top:329.1px;font-size:14px;line-height:14px;color:#ededed;font-weight:400;">Delete</div>
<div class="t" style="left:880.0px;top:373.3px;font-size:14px;line-height:14px;color:#ededed;font-weight:400;">Duplicate</div>
<div class="t" style="left:880.0px;top:417.1px;font-size:14px;line-height:14px;color:#ededed;font-weight:400;">Edit</div>
<div class="t" style="left:880.0px;top:460.8px;font-size:14px;line-height:14px;color:#8a8b8e;font-weight:400;">Explore</div>
</body></html>
